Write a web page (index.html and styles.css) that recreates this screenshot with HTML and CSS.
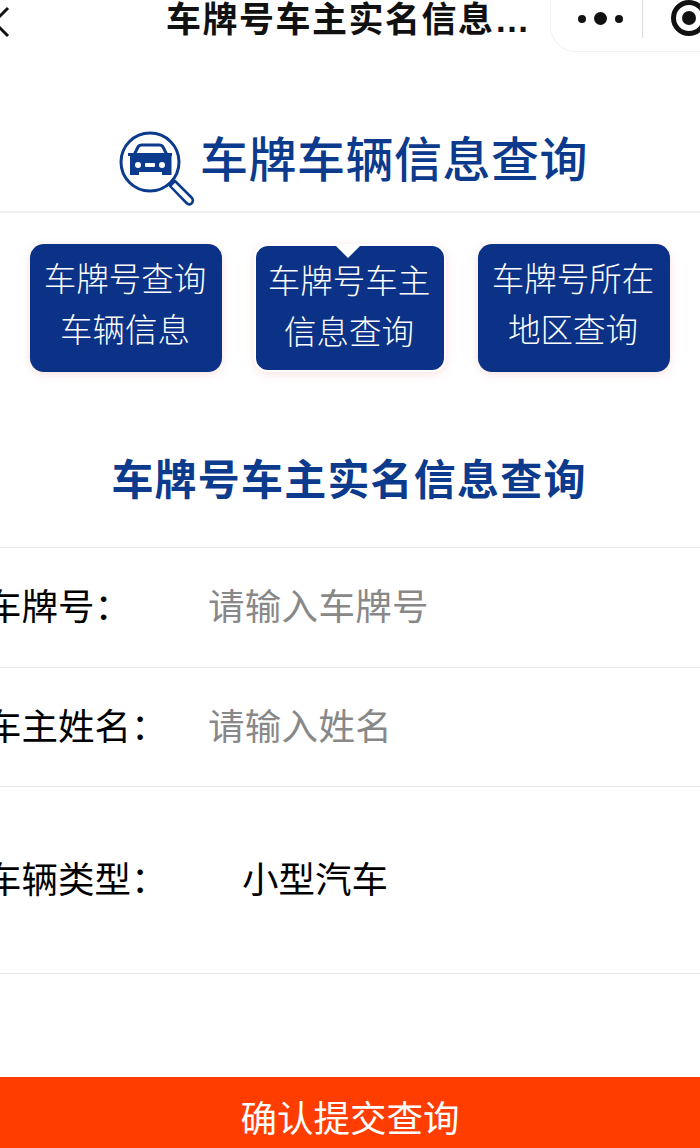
FILE: index.html
```html
<!DOCTYPE html>
<html lang="zh-CN">
<head>
    <meta charset="UTF-8">
    <meta name="viewport" content="width=device-width, initial-scale=1.0">
    <title>车牌号车主实名信息查询</title>
    <link rel="stylesheet" href="styles.css">
</head>
<body>
  <div class="page">
    <!-- Mini program nav bar -->
    <header class="nav">
      <svg class="nav-back" viewBox="0 0 14 32" width="14" height="32">
        <path d="M8 2 L-6 16 L8 30" fill="none" stroke="#111" stroke-width="3"/>
      </svg>
      <h2 class="nav-title">车牌号车主实名信息查询</h2>
      <div class="capsule">
        <div class="capsule-dots">
          <span class="dot"></span>
          <span class="dot dot-big"></span>
          <span class="dot"></span>
        </div>
        <div class="capsule-line"></div>
        <div class="capsule-target"><span></span></div>
      </div>
    </header>

    <div class="logo">
      <svg class="logo-icon" viewBox="118 128 78 78" width="78" height="78">
        <circle cx="150" cy="162" r="29" fill="none" stroke="#0c3a8c" stroke-width="3"/>
        <path d="M170 186 L175 181 L192 198 Q194 201 191.500 203.500 Q189 205.500 186.500 203 Z" fill="#fff" stroke="#0c3a8c" stroke-width="2.500" stroke-linejoin="round"/>
        <path d="M134 155 L138 147 Q139 145 142 145 H159 Q162 145 163 147 L167 155" fill="none" stroke="#0c3a8c" stroke-width="3"/>
        <path d="M128 153 H172 V156 H171.500 V175 H162 V172 H139 V175 H130 V156 H128 Z" fill="#0c3a8c"/>
        <circle cx="138" cy="165" r="3" fill="#fff"/>
        <circle cx="162" cy="165" r="3" fill="#fff"/>
        <rect x="145" y="163" width="10" height="4" rx="1" fill="#fff"/>
      </svg>
      <h1 class="logo-text">车牌车辆信息查询</h1>
    </div>

    <nav class="tabs">
      <a class="tab">车牌号查询<br>车辆信息</a>
      <a class="tab tab-active">车牌号车主<br>信息查询</a>
      <a class="tab">车牌号所在<br>地区查询</a>
    </nav>

    <h3 class="heading">车牌号车主实名信息查询</h3>

    <form class="form">
      <div class="row">
        <label class="row-label">车牌号：</label>
        <span class="row-value placeholder">请输入车牌号</span>
      </div>
      <div class="row">
        <label class="row-label">车主姓名：</label>
        <span class="row-value placeholder">请输入姓名</span>
      </div>
      <div class="row row-tall">
        <label class="row-label">车辆类型：</label>
        <span class="row-value row-select">小型汽车</span>
      </div>
    </form>

    <button class="submit" type="button">确认提交查询</button>
  </div>
</body>
</html>
```

FILE: styles.css
```css
* {
    margin: 0;
    padding: 0;
    box-sizing: border-box;
}

body {
    font-family: "Liberation Sans", "Noto Sans CJK SC", sans-serif;
    background: #ffffff;
    color: #000000;
}

.page {
    width: 700px;
    height: 1148px;
    overflow: hidden;
}

/* Nav bar */
.nav {
    display: flex;
    height: 52px;
}

.nav-back {
    flex: none;
    margin-top: 6px;
    margin-right: 152px;
}

.nav-title {
    width: 384px;
    height: 40px;
    flex: none;
    font-size: 35px;
    line-height: 40px;
    font-weight: 700;
    letter-spacing: 1.500px;
    color: #111111;
    white-space: nowrap;
    overflow: hidden;
    text-overflow: ellipsis;
}

.capsule {
    flex: none;
    display: flex;
    width: 180px;
    height: 52px;
    border: 1px solid #f2f2f2;
    border-top: none;
    border-radius: 0 0 0 26px;
    margin-right: -30px;
}

.capsule-dots {
    display: flex;
    align-items: center;
    gap: 8px;
    width: 91px;
    height: 37px;
    padding-left: 27px;
}

.dot {
    width: 8px;
    height: 8px;
    border-radius: 50%;
    background: #111111;
}

.dot-big {
    width: 13px;
    height: 13px;
}

.capsule-line {
    width: 1px;
    height: 38px;
    background: #dddddd;
}

.capsule-target {
    display: flex;
    align-items: center;
    justify-content: center;
    width: 36px;
    height: 36px;
    margin-left: 28px;
    border: 5px solid #111111;
    border-radius: 50%;
}

.capsule-target span {
    width: 14px;
    height: 14px;
    border-radius: 50%;
    background: #111111;
}

/* Logo banner */
.logo {
    display: flex;
    align-items: center;
    height: 161px;
    padding: 70px 0 0 118px;
    border-bottom: 2px solid #eeeeee;
}

.logo-icon {
    flex: none;
    margin-right: 4px;
}

.logo-text {
    font-size: 48px;
    line-height: 60px;
    font-weight: 500;
    letter-spacing: 0.500px;
    color: #0c3a8c;
    white-space: nowrap;
    margin-bottom: 12px;
}

/* Tabs */
.tabs {
    display: flex;
    gap: 32px;
    padding: 31px 30px 0;
}

.tab {
    position: relative;
    width: 192px;
    height: 128px;
    padding: 11px 2px 0 0;
    background: #0b3287;
    border-radius: 14px;
    color: #ffffff;
    font-size: 32.500px;
    font-weight: 300;
    line-height: 51px;
    text-align: center;
    box-shadow: 0 2px 8px rgba(240, 130, 130, 0.25);
}

.tab-active {
    border: 2px solid #ffffff;
}

/* notch pointing down from the top edge */
.tab-active::before {
    content: '';
    position: absolute;
    top: 0;
    left: 80px;
    border-top: 12px solid #ffffff;
    border-left: 12px solid transparent;
    border-right: 12px solid transparent;
}

.heading {
    margin-top: 80px;
    font-size: 42px;
    line-height: 58px;
    font-weight: 700;
    letter-spacing: 1.200px;
    text-align: center;
    color: #0c3a8c;
    padding-right: 2px;
}

/* Form */
.form {
    margin-top: 37px;
    border-top: 1px solid #e6e6e6;
}

.row {
    display: flex;
    align-items: center;
    height: 120px;
    padding-bottom: 6px;
    border-bottom: 1px solid #e6e6e6;
    font-size: 36.500px;
    margin-left: -15px;
}

.row + .row {
    height: 119px;
}

.row-tall,
.row + .row-tall {
    height: 187px;
}

.row-label {
    flex: none;
    width: 223px;
    white-space: nowrap;
}

.placeholder {
    color: #888888;
    letter-spacing: 0.300px;
}

.row-select {
    margin-left: 34px;
}

.submit {
    display: block;
    width: 100%;
    height: 71px;
    margin-top: 103px;
    padding-top: 8px;
    border: none;
    background: #ff3d00;
    color: #ffffff;
    font-family: inherit;
    font-size: 36.500px;
}
```
